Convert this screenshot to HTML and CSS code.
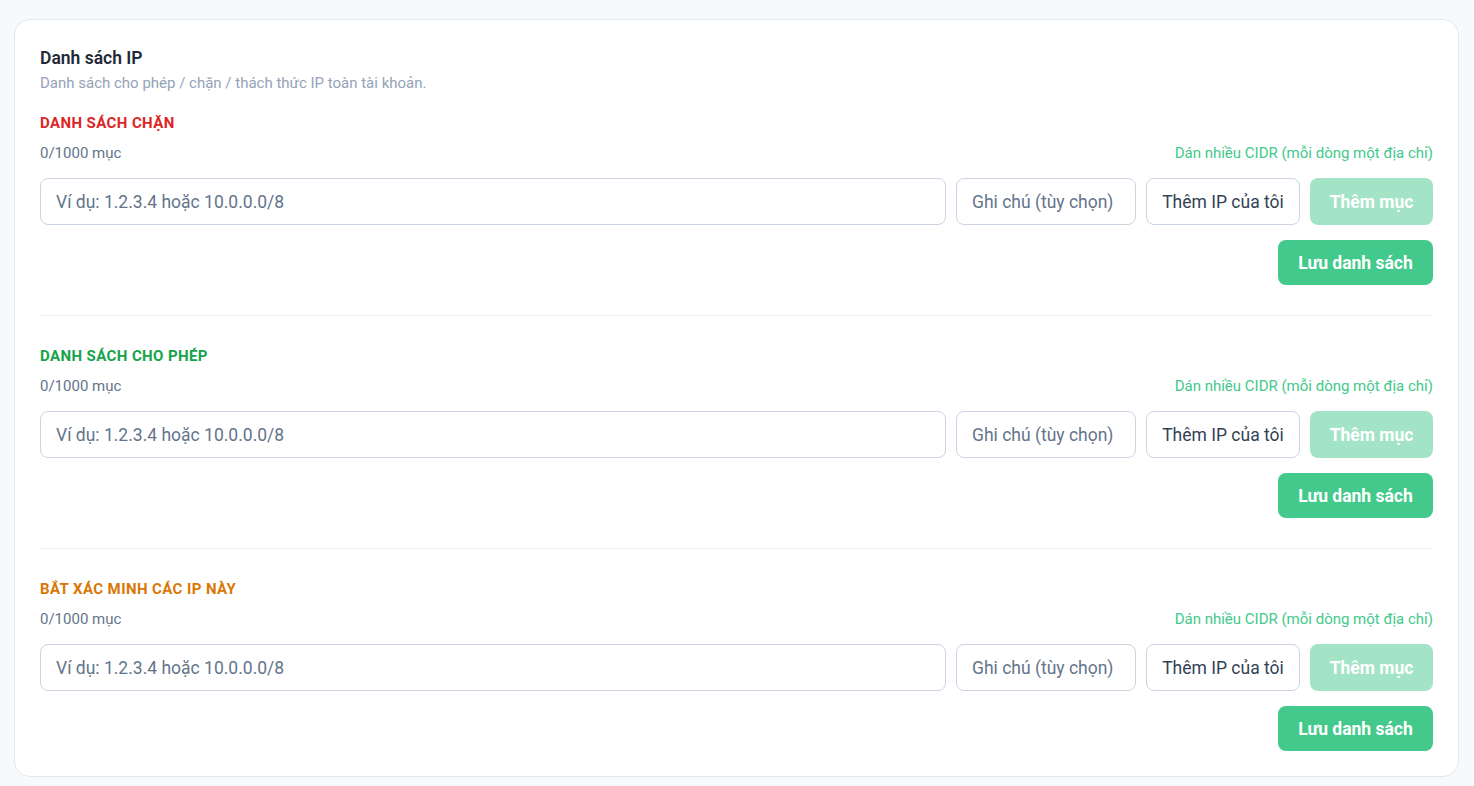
FILE: index.html
```html
<!DOCTYPE html>
<html lang="vi">
<head>
    <meta charset="utf-8">
    <title>Danh sách IP</title>
    <meta name="viewport" content="width=device-width, initial-scale=1.0">
    <link rel="stylesheet" href="styles.css">
</head>
<body>
    <div class="card">
        <h2 class="card-title">Danh sách IP</h2>
        <p class="card-desc">Danh sách cho phép / chặn / thách thức IP toàn tài khoản.</p>

        <section class="ip-list">
            <h3 class="list-title block">DANH SÁCH CHẶN</h3>
            <div class="list-meta">
                <span class="count">0/1000 mục</span>
                <a class="bulk-link" href="#">Dán nhiều CIDR (mỗi dòng một địa chỉ)</a>
            </div>
            <div class="add-row">
                <input class="field field-ip" type="text" placeholder="Ví dụ: 1.2.3.4 hoặc 10.0.0.0/8">
                <input class="field field-note" type="text" placeholder="Ghi chú (tùy chọn)">
                <button class="btn btn-outline">Thêm IP của tôi</button>
                <button class="btn btn-add" disabled>Thêm mục</button>
            </div>
            <div class="save-row">
                <button class="btn btn-save">Lưu danh sách</button>
            </div>
        </section>

        <section class="ip-list">
            <h3 class="list-title allow">DANH SÁCH CHO PHÉP</h3>
            <div class="list-meta">
                <span class="count">0/1000 mục</span>
                <a class="bulk-link" href="#">Dán nhiều CIDR (mỗi dòng một địa chỉ)</a>
            </div>
            <div class="add-row">
                <input class="field field-ip" type="text" placeholder="Ví dụ: 1.2.3.4 hoặc 10.0.0.0/8">
                <input class="field field-note" type="text" placeholder="Ghi chú (tùy chọn)">
                <button class="btn btn-outline">Thêm IP của tôi</button>
                <button class="btn btn-add" disabled>Thêm mục</button>
            </div>
            <div class="save-row">
                <button class="btn btn-save">Lưu danh sách</button>
            </div>
        </section>

        <section class="ip-list">
            <h3 class="list-title challenge">BẮT XÁC MINH CÁC IP NÀY</h3>
            <div class="list-meta">
                <span class="count">0/1000 mục</span>
                <a class="bulk-link" href="#">Dán nhiều CIDR (mỗi dòng một địa chỉ)</a>
            </div>
            <div class="add-row">
                <input class="field field-ip" type="text" placeholder="Ví dụ: 1.2.3.4 hoặc 10.0.0.0/8">
                <input class="field field-note" type="text" placeholder="Ghi chú (tùy chọn)">
                <button class="btn btn-outline">Thêm IP của tôi</button>
                <button class="btn btn-add" disabled>Thêm mục</button>
            </div>
            <div class="save-row">
                <button class="btn btn-save">Lưu danh sách</button>
            </div>
        </section>
    </div>
</body>
</html>
```

FILE: styles.css
```css
:root {
    --bg: #f8f9fb;
    --card-border: #e2e8f0;
    --text: #1e293b;
    --muted: #94a3b8;
    --count: #64748b;
    --input-border: #cbd5e1;
    --green: #43c98b;
    --green-light: #a3e4c6;
    --radius: 8px;
}

* {
    box-sizing: border-box;
}

body {
    margin: 0;
    background: var(--bg);
    font-family: Roboto, 'Liberation Sans', sans-serif;
    color: var(--text);
}

.card {
    margin: 19px 15px 10px 14px;
    background: white;
    border: 1px solid var(--card-border);
    border-radius: 16px;
    padding: 26px 25px 25px;
}

.card-title {
    margin: 0;
    font-size: 17.5px;
    line-height: 24px;
    font-weight: 600;
    color: #1f2937;
}

.card-desc {
    margin: 3px 0 0;
    font-size: 15px;
    line-height: 20px;
    color: var(--muted);
}

.ip-list {
    padding: 21px 0 30px;
    border-bottom: 1px solid #eef1f5;
}

.ip-list + .ip-list {
    padding-top: 31px;
}

.ip-list:last-child {
    border-bottom: none;
    padding-bottom: 0;
}

.list-title {
    margin: 0;
    font-size: 15px;
    line-height: 18px;
    font-weight: 700;
    letter-spacing: 0.4px;
}

.list-title.block { color: #dc2626; }
.list-title.allow { color: #16a34a; }
.list-title.challenge { color: #d97706; }

.list-meta {
    display: flex;
    justify-content: space-between;
    align-items: center;
    margin-top: 12px;
    font-size: 15px;
    line-height: 18px;
}

.count {
    color: var(--count);
}

.bulk-link {
    color: var(--green);
    text-decoration: none;
}

.add-row {
    display: flex;
    gap: 10px;
    margin-top: 16px;
    height: 47px;
}

.field {
    height: 47px;
    border: 1px solid var(--input-border);
    border-radius: var(--radius);
    padding: 0 15px;
    font-family: inherit;
    font-size: 17.5px;
    color: var(--text);
    background: white;
    outline: none;
}

.field::placeholder {
    color: #64748b;
}

.field-ip {
    flex: 1;
    min-width: 0;
}

.field-note {
    width: 180px;
}

.btn {
    font-family: inherit;
    font-size: 17.5px;
    border-radius: var(--radius);
    cursor: pointer;
    padding: 0 12px;
}

.btn-outline {
    width: 154px;
    background: white;
    border: 1px solid var(--input-border);
    color: #334155;
}

.btn-add {
    width: 123px;
    background: var(--green-light);
    border: none;
    color: white;
    font-weight: 700;
    cursor: default;
}

.save-row {
    display: flex;
    justify-content: flex-end;
    margin-top: 15px;
}

.btn-save {
    height: 45px;
    width: 155px;
    background: var(--green);
    border: none;
    color: white;
    font-weight: 700;
}
```
